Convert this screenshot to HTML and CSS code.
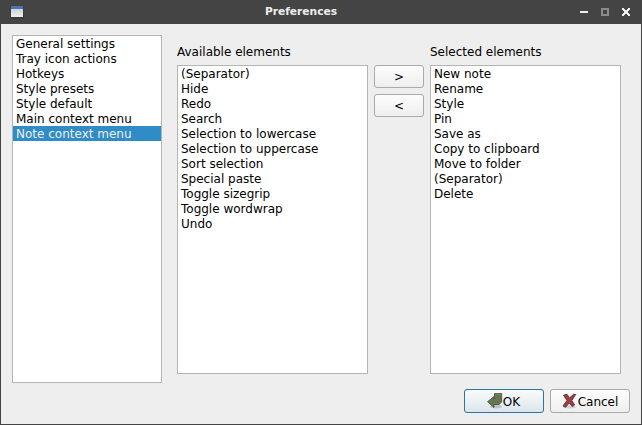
FILE: index.html
```html
<!DOCTYPE html>
<html lang="en">
<head>
<meta charset="utf-8">
<title>Preferences</title>
<link rel="stylesheet" href="styles.css">
</head>
<body>
<div class="window">
  <header class="titlebar">
    <svg class="app-icon" width="14" height="14" viewBox="0 0 14 14">
      <defs><linearGradient id="pane" x1="0" y1="0" x2="0" y2="1"><stop offset="0" stop-color="#d2d2d2"/><stop offset="1" stop-color="#eeeeee"/></linearGradient></defs>
      <path fill="#373b42" d="M0 1h14v13H0z"/>
      <path fill="url(#pane)" d="M1 4h12v8H1z"/>
      <path fill="#4576b8" d="M1 1h12v3H1z"/>
    </svg>
    <h1 class="title">Preferences</h1>
    <div class="controls">
      <svg width="8" height="8" viewBox="0 0 8 8"><path fill="#eee" d="M0 3h8v2H0z"/></svg>
      <svg width="8" height="8" viewBox="0 0 8 8"><path fill="none" stroke="#8b8b8b" stroke-width="2" d="M1 1h6v6H1z"/></svg>
      <svg width="8" height="8" viewBox="0 0 8 8" shape-rendering="crispEdges"><path fill="#eee" d="M0 0h2v1h1v1h2V1h1V0h2v2H7v1H6v2h1v1h1v2H6V7H5V6H3v1H2v1H0V6h1V5h1V3H1V2H0z"/></svg>
    </div>
  </header>
  <main class="content">
    <ul class="list nav">
      <li>General settings</li>
      <li>Tray icon actions</li>
      <li>Hotkeys</li>
      <li>Style presets</li>
      <li>Style default</li>
      <li>Main context menu</li>
      <li class="active">Note context menu</li>
    </ul>
    <section class="column">
      <h2 class="label">Available elements</h2>
      <ul class="list">
        <li>(Separator)</li>
        <li>Hide</li>
        <li>Redo</li>
        <li>Search</li>
        <li>Selection to lowercase</li>
        <li>Selection to uppercase</li>
        <li>Sort selection</li>
        <li>Special paste</li>
        <li>Toggle sizegrip</li>
        <li>Toggle wordwrap</li>
        <li>Undo</li>
      </ul>
    </section>
    <div class="transfer">
      <button class="button">&gt;</button>
      <button class="button">&lt;</button>
    </div>
    <section class="column">
      <h2 class="label">Selected elements</h2>
      <ul class="list">
        <li>New note</li>
        <li>Rename</li>
        <li>Style</li>
        <li>Pin</li>
        <li>Save as</li>
        <li>Copy to clipboard</li>
        <li>Move to folder</li>
        <li>(Separator)</li>
        <li>Delete</li>
      </ul>
    </section>
  </main>
  <footer class="actions">
    <button class="button default">
      <svg width="16" height="16" viewBox="0 0 16 16">
        <ellipse cx="9" cy="13.500" rx="6" ry="1.800" fill="#777" opacity=".35"/>
        <path fill="#64784f" stroke="#465040" stroke-width=".8" stroke-linejoin="round" d="M7.500.500h7.200v8.300L12.200 11.500H7V14.500L.500 8.700 7 3.500V6h.500z"/>
        <path fill="none" stroke="#87976f" stroke-width=".6" d="M8.400 1.300h5.400"/>
      </svg><span>OK</span>
    </button>
    <button class="button cancel">
      <svg width="16" height="16" viewBox="0 0 16 16">
        <ellipse cx="8" cy="14" rx="6" ry="1.500" fill="#777" opacity=".25"/>
        <path fill="#a83a45" stroke="#542e33" stroke-width=".9" stroke-linejoin="round" d="M1.500 2.200L5 1.300 7.500 5 11.500 1.300 13.700 1.500 9.800 7.400 12.600 12 10.200 13.500 7.300 9.900 3.500 14.300 1 13 5 7.500z"/>
      </svg><span>Cancel</span>
    </button>
  </footer>
</div>
</body>
</html>
```
FILE: styles.css
```css
* { box-sizing: border-box; }
body { margin: 0; }
.window {
  width: 642px;
  height: 425px;
  display: flex;
  flex-direction: column;
  background: #eee;
  border: 1px solid #444;
  border-top: 0;
  font: 12px/15px "DejaVu Sans", sans-serif;
  color: #000;
}
.titlebar {
  height: 24px;
  flex: none;
  display: grid;
  grid-template-columns: 60px 1fr 60px;
  align-items: center;
  background: #444;
  padding: 0 11px 0 9px;
}
.title {
  margin: 0;
  padding-right: 38px;
  font-size: 10.67px;
  line-height: 14px;
  font-weight: bold;
  text-align: center;
  color: #eee;
}
.app-icon { display: block; }
.controls { display: flex; justify-content: flex-end; gap: 13px; }
.controls svg { display: block; }
.content {
  display: grid;
  grid-template-columns: 150px 191px 50px 191px;
  padding: 11px 0 0 11px;
  height: 359px;
}
.column { display: flex; flex-direction: column; height: 339px; }
.content > :nth-child(2) { margin-left: 15px; margin-right: -15px; }
.transfer {
  margin: 30px -21px 0 21px;
  display: flex;
  flex-direction: column;
  gap: 6px;
}
.content > :nth-child(4) { margin-left: 27px; margin-right: -27px; }
.label { margin: 0; padding-top: 10px; height: 30px; flex: none; font-size: 12px; line-height: 15px; font-weight: normal; }
.list {
  margin: 0;
  padding: 0;
  list-style: none;
  background: #fff;
  border: 1px solid #b4b4b4;
  flex: 1;
}
.list li { height: 15px; line-height: 17px; padding-left: 3px; white-space: nowrap; }
.list .active { background: #308cc6; color: #eee; }
.button {
  height: 23px;
  padding: 2px 0 0;
  border: 1px solid #aaa;
  border-radius: 3px;
  background: linear-gradient(#fdfdfd, #eee);
  font: inherit;
  color: #000;
  display: flex;
  align-items: center;
  justify-content: center;
}
.actions { display: flex; justify-content: flex-end; gap: 6px; padding: 6px 11px 0 0; }
.actions .button { width: 80px; height: 24px; padding-right: 1px; }
.actions .cancel { padding-right: 0; }
.actions svg { margin-top: -2px; }
.actions .default { border-color: #2b75a2; background: linear-gradient(#fafbfc, #dce5eb); }
```
